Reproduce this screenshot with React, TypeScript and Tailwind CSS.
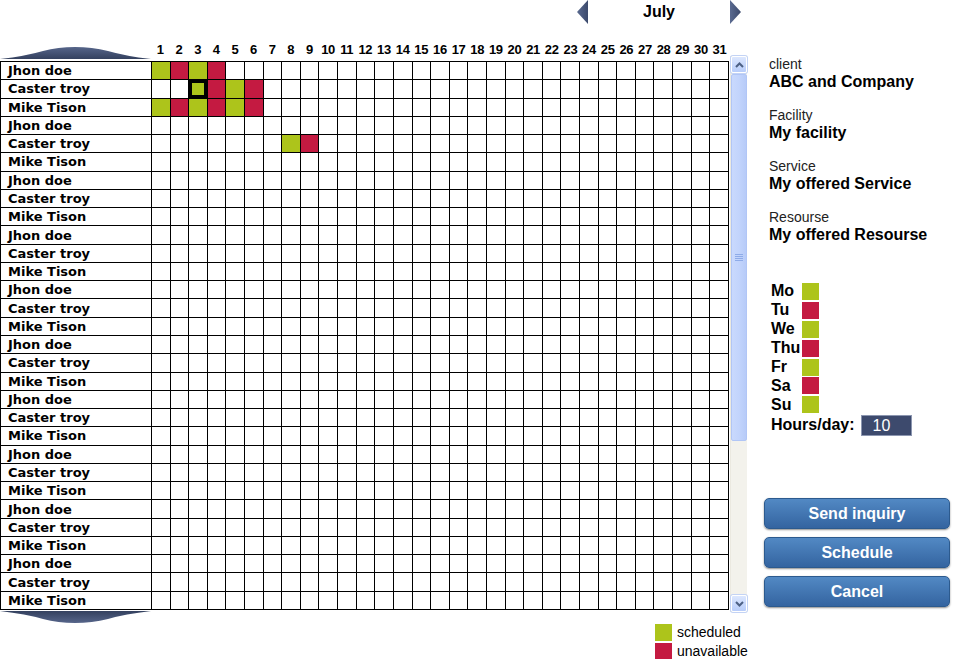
import React from 'react';

const NAMES = ['Jhon doe', 'Caster troy', 'Mike Tison'];
const DAYS = Array.from({ length: 31 }, (_, i) => i + 1);
const ROWS = Array.from({ length: 30 }, (_, i) => NAMES[i % 3]);

// row index -> day -> status
const MARKS: Record<string, 'g' | 'r'> = {
  '0-1': 'g', '0-2': 'r', '0-3': 'g', '0-4': 'r',
  '1-3': 'g', '1-4': 'r', '1-5': 'g', '1-6': 'r',
  '2-1': 'g', '2-2': 'r', '2-3': 'g', '2-4': 'r', '2-5': 'g', '2-6': 'r',
  '4-8': 'g', '4-9': 'r',
};

const WEEK: [string, 'g' | 'r'][] = [
  ['Mo', 'g'], ['Tu', 'r'], ['We', 'g'], ['Thu', 'r'], ['Fr', 'g'], ['Sa', 'r'], ['Su', 'g'],
];

const INFO = [
  ['client', 'ABC and Company'],
  ['Facility', 'My facility'],
  ['Service', 'My offered Service'],
  ['Resourse', 'My offered Resourse'],
];

function Arrow({ dir }: { dir: 'left' | 'right' }) {
  return (
    <svg width="12" height="24" viewBox="0 0 12 24">
      <defs>
        <linearGradient id={`arr-${dir}`} x1="0" y1="0" x2="1" y2="0">
          <stop offset="0" stopColor="#5a6a90" />
          <stop offset="1" stopColor="#3c4a6c" />
        </linearGradient>
      </defs>
      {dir === 'left'
        ? <polygon points="11,0 11,24 0,12" fill={`url(#arr-${dir})`} />
        : <polygon points="1,0 1,24 12,12" fill={`url(#arr-${dir})`} />}
    </svg>
  );
}

function Roof({ down }: { down?: boolean }) {
  return (
    <svg width="151" height="12" viewBox="0 0 151 12" className="block">
      <defs>
        <linearGradient id={down ? 'roof-d' : 'roof-u'} x1="0" y1="0" x2="0" y2="1">
          <stop offset="0" stopColor={down ? '#34415f' : '#56658a'} />
          <stop offset="1" stopColor={down ? '#56658a' : '#34415f'} />
        </linearGradient>
      </defs>
      {down
        ? <path d="M0,0 L151,0 Q125,3 108,8 Q92,12 75,12 Q58,12 43,8 Q26,3 0,0 Z" fill="url(#roof-d)" />
        : <path d="M0,12 L151,12 Q125,9 108,4 Q92,0 75,0 Q58,0 43,4 Q26,9 0,12 Z" fill="url(#roof-u)" />}
    </svg>
  );
}

function ScrollButton({ up }: { up?: boolean }) {
  return (
    <div className="h-[17px] shrink-0 rounded-[2px] border border-white bg-linear-to-b from-[#dce7fe] to-[#b8cdfa] shadow-[0_0_0_1px_#c3d3f5] flex items-center justify-center">
      <svg width="9" height="6" viewBox="0 0 9 6">
        <path d={up ? 'M1,5 L4.5,1.5 L8,5' : 'M1,1 L4.5,4.5 L8,1'} fill="none" stroke="#4d6185" strokeWidth="2" />
      </svg>
    </div>
  );
}

function Scrollbar() {
  return (
    <div className="w-[17px] h-[556px] shrink-0 -mt-[5px] ml-px flex flex-col bg-[#f3f2ec] border-l border-[#ebe9e0]">
      <ScrollButton up />
      <div className="flex-1 flex flex-col pt-px">
        <div className="h-[367px] rounded-[2px] border border-[#b1c6f6] bg-linear-to-r from-[#c9d9fd] via-[#c2d4fc] to-[#b7cbf8] flex flex-col items-center justify-center gap-[1px]">
          {[0, 1, 2, 3].map(i => (
            <div key={i} className="w-[8px] h-px bg-[#8eabe8]" />
          ))}
        </div>
      </div>
      <ScrollButton />
    </div>
  );
}

export default function App() {
  return (
    <div className="w-[961px] h-[659px] bg-white flex overflow-hidden font-['Liberation_Sans',Arial,sans-serif] text-black">
      {/* calendar side */}
      <div className="w-[750px] shrink-0 flex flex-col">
        <div className="h-[24px] shrink-0 flex items-center pl-[577px]">
          <Arrow dir="left" />
          <div className="w-[140px] text-center text-[16px] font-bold leading-none">July</div>
          <Arrow dir="right" />
        </div>

        <div className="h-[37px] shrink-0 flex items-end w-[729px]">
          <div className="mb-[2px]">
            <Roof />
          </div>
          <div className="flex-1 flex mb-[3px]">
            {DAYS.map(d => (
              <div key={d} className="flex-1 text-center text-[13px] leading-[16px] font-bold tracking-[-0.3px]">
                {d}
              </div>
            ))}
          </div>
        </div>

        <div className="flex items-start shrink-0">
          <div className="flex flex-col">
            <table className="border-collapse table-fixed w-[729px]">
              <colgroup>
                <col className="w-[151px]" />
                {DAYS.map(d => <col key={d} />)}
              </colgroup>
              <tbody>
                {ROWS.map((name, r) => (
                  <tr key={r} className="h-[18.27px]">
                    <td className="border border-black p-0 pl-[7px] text-[13px] leading-none font-bold font-['DejaVu_Sans',Verdana,sans-serif] whitespace-nowrap">
                      {name}
                    </td>
                    {DAYS.map(d => {
                      const m = MARKS[`${r}-${d}`];
                      const selected = r === 1 && d === 3;
                      return (
                        <td
                          key={d}
                          className={
                            'border border-black p-0 ' +
                            (m === 'g' ? 'bg-[#adc41b] ' : m === 'r' ? 'bg-[#c41a41] ' : '') +
                            (selected ? 'shadow-[inset_0_0_0_3px_#000]' : '')
                          }
                        />
                      );
                    })}
                  </tr>
                ))}
              </tbody>
            </table>
            <div className="mt-px">
              <Roof down />
            </div>
          </div>
          <Scrollbar />
        </div>

        <div className="pl-[655px] flex flex-col text-[14px] shrink-0">
          <div className="h-[19px] flex items-center gap-[5px]">
            <div className="w-[17px] h-[17px] bg-[#adc41b]" />
            <span>scheduled</span>
          </div>
          <div className="h-[19px] flex items-center gap-[5px]">
            <div className="w-[17px] h-[17px] bg-[#c41a41]" />
            <span>unavailable</span>
          </div>
        </div>
      </div>

      {/* details side */}
      <div className="flex-1 pl-[14px] pt-[56px] flex flex-col">
        <div className="pl-[5px] flex flex-col gap-[16px]">
          {INFO.map(([label, value]) => (
            <div key={label} className="flex flex-col">
              <span className="text-[14px] leading-[16px] text-[#222]">{label}</span>
              <span className="text-[16px] leading-[19px] font-bold">{value}</span>
            </div>
          ))}
        </div>

        <div className="pl-[7px] mt-[38px] flex flex-col">
          {WEEK.map(([day, s]) => (
            <div key={day} className="h-[18.9px] flex items-center">
              <span className="w-[31px] text-[16px] leading-none font-bold">{day}</span>
              <div className={'w-[17px] h-[17px] ' + (s === 'g' ? 'bg-[#adc41b]' : 'bg-[#c41a41]')} />
            </div>
          ))}
          <div className="h-[22px] flex items-center gap-[6px]">
            <span className="text-[16px] leading-none font-bold">Hours/day:</span>
            <div className="w-[51px] h-[21px] bg-[#3d4a6d] border border-[#8c96b0] text-white text-[16px] leading-[19px] pl-[11px]">
              10
            </div>
          </div>
        </div>

        <div className="mt-[62px] flex flex-col gap-[8px] w-[186px]">
          {['Send inquiry', 'Schedule', 'Cancel'].map(b => (
            <button
              key={b}
              className="h-[31px] rounded-[5px] border border-[#2c5a8e] bg-linear-to-b from-[#5289c4] to-[#3464a0] shadow-[0_1px_2px_rgba(0,0,0,0.45)] text-white text-[16px] font-bold"
            >
              {b}
            </button>
          ))}
        </div>
      </div>
    </div>
  );
}
